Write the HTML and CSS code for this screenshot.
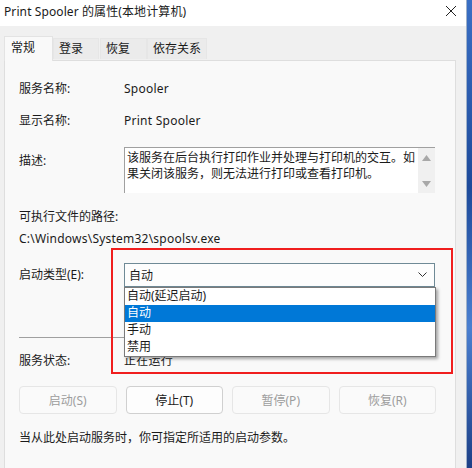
FILE: index.html
```html
<!DOCTYPE html>
<html lang="zh-CN">
<head>
<meta charset="utf-8">
<link rel="stylesheet" href="styles.css">
</head>
<body>
<div class="screen">
  <div class="dialog">
    <div class="titlebar">
      <span class="title">Print Spooler 的属性(本地计算机)</span>
      <svg class="close" width="12" height="12" viewBox="0 0 12 12"><path d="M1 1 L11 11 M11 1 L1 11" stroke="#222" stroke-width="1" fill="none"/></svg>
    </div>
    <div class="body">
      <div class="tabs">
        <div class="tab active">常规</div>
        <div class="tab">登录</div>
        <div class="tab">恢复</div>
        <div class="tab">依存关系</div>
      </div>
      <div class="panel">
        <div class="row r1"><span class="label">服务名称:</span><span class="value">Spooler</span></div>
        <div class="row r2"><span class="label">显示名称:</span><span class="value">Print Spooler</span></div>
        <div class="row r3"><span class="label top">描述:</span>
          <div class="desc">
            <div class="desc-text">该服务在后台执行打印作业并处理与打印机的交互。如果关闭该服务，则无法进行打印或查看打印机。</div>
            <div class="scroll">
              <svg width="9" height="6" viewBox="0 0 9 6"><path d="M0 6 L4.5 0 L9 6 Z" fill="#a8a8a8"/></svg>
              <svg width="9" height="6" viewBox="0 0 9 6"><path d="M0 0 L4.5 6 L9 0 Z" fill="#a8a8a8"/></svg>
            </div>
          </div>
        </div>
        <div class="line r4">可执行文件的路径:</div>
        <div class="line r5">C:\Windows\System32\spoolsv.exe</div>
        <div class="row r6"><span class="label">启动类型(E):</span>
          <div class="combo-wrap">
            <div class="combo">
              <span>自动</span>
              <svg width="9" height="6" viewBox="0 0 9 6"><path d="M0.5 0.5 L4.5 4.5 L8.5 0.5" stroke="#333" stroke-width="1" fill="none"/></svg>
            </div>
            <div class="list">
              <div class="item">自动(延迟启动)</div>
              <div class="item sel">自动</div>
              <div class="item">手动</div>
              <div class="item">禁用</div>
            </div>
          </div>
        </div>
        <div class="sep"></div>
        <div class="row r7"><span class="label">服务状态:</span><span class="value">正在运行</span></div>
        <div class="buttons">
          <button class="btn dis">启动(S)</button>
          <button class="btn">停止(T)</button>
          <button class="btn dis">暂停(P)</button>
          <button class="btn dis">恢复(R)</button>
        </div>
        <div class="line r8">当从此处启动服务时，你可指定所适用的启动参数。</div>
      </div>
    </div>
  </div>
  <div class="redbox"></div>
</div>
</body>
</html>
```
FILE: styles.css
```css
* { box-sizing: border-box; }
html, body { margin: 0; padding: 0; }
body {
  width: 472px;
  height: 468px;
  overflow: hidden;
  background: linear-gradient(180deg, #3a6fc4 0%, #1d4a9a 40%, #4a7fd0 70%, #1c3f86 100%);
  font-family: "Noto Sans", "Noto Sans CJK SC", sans-serif;
  font-size: 12px;
  color: #1b1b1b;
}
.screen { position: relative; width: 472px; height: 468px; }
.dialog {
  width: 467px;
  height: 468px;
  background: #f0f0f0;
  border-right: 1px solid #9fb1c9;
  display: flex;
  flex-direction: column;
}
.titlebar {
  height: 26px;
  background: #ffffff;
  display: flex;
  align-items: center;
  justify-content: space-between;
  padding: 0 9px 2px 4px;
  flex: none;
}
.title { font-size: 12px; color: #1a1a1a; line-height: 16px; letter-spacing: 0.1px; }
.close { margin-top: -2px; }
.body { flex: 1; padding: 9px 10px 0 4px; display: flex; flex-direction: column; }
.tabs { display: flex; align-items: flex-end; height: 25px; position: relative; z-index: 1; }
.tab {
  height: 21px;
  margin-bottom: 1px;
  padding: 0 5px;
  line-height: 20px;
  white-space: nowrap;
  background: #ebebeb;
  border: 1px solid #e6e6e6;
  border-bottom: none;
  color: #1a1a1a;
}
.tab:nth-child(2) { width: 46px; }
.tab:nth-child(3) { width: 47px; margin-left: 1px; }
.tab:nth-child(4) { width: 60px; }
.tab.active {
  width: 49px;
  height: 25px;
  margin-bottom: -1px;
  padding: 0 6px;
  line-height: 22px;
  background: #f9f9f9;
  border: 1px solid #e3e3e3;
  border-bottom: none;
}
.panel {
  flex: 1;
  background: #f9f9f9;
  border: 1px solid #dedede;
  border-bottom: none;
  padding: 18px 0 0 14px;
  width: 452px;
  display: flex;
  flex-direction: column;
}
.row { display: flex; align-items: center; }
.label { width: 105px; flex: none; line-height: 20px; }
.label.top { align-self: flex-start; margin-top: 4px; }
.value { line-height: 20px; letter-spacing: 0.25px; }
.line { line-height: 20px; }
.r2 { margin-top: 12px; }
.r3 { margin-top: 16px; align-items: flex-start; }
.desc {
  width: 311px;
  height: 46px;
  background: #ffffff;
  border-top: 1px solid #a0a0a0;
  border-left: 1px solid #a0a0a0;
  display: flex;
}
.desc-text { flex: 1; padding: 2px 2px 0 2px; line-height: 16px; }
.scroll {
  width: 17px;
  background: #f0f0f0;
  display: flex;
  flex-direction: column;
  justify-content: space-between;
  align-items: center;
  padding: 7px 0 6px;
}
.r4 { margin-top: 14px; }
.r5 { margin-top: 2px; letter-spacing: 0.22px; }
.r6 { margin-top: 14px; }
.combo-wrap { position: relative; width: 312px; }
.combo {
  height: 24px;
  width: 311px;
  background: #fdfdfd;
  border: 1px solid #6f8a96;
  display: flex;
  align-items: center;
  justify-content: space-between;
  padding: 0 7px 0 4px;
}
.list {
  position: absolute;
  top: 24px;
  left: 0;
  width: 312px;
  background: #ffffff;
  border: 1px solid #7a7a7a;
  box-shadow: 2px 2px 3px rgba(0,0,0,0.35);
  z-index: 2;
}
.item { height: 17px; line-height: 16px; padding-left: 2px; }
.item.sel { background: #0078d7; color: #ffffff; }
.sep { margin-top: 50px; height: 1px; width: 416px; background: #a0a0a0; }
.r7 { margin-top: 13px; }
.buttons {
  margin-top: 15px;
  width: 417px;
  display: grid;
  grid-template-columns: repeat(4, 1fr);
  gap: 9px;
}
.btn {
  height: 28px;
  font-family: inherit;
  font-size: 12px;
  background: #fdfdfd;
  border: 1px solid #d0d0d0;
  border-radius: 4px;
  color: #1a1a1a;
  padding: 0;
}
.btn.dis { background: #fafafa; border-color: #e6e6e6; color: #9d9d9d; }
.r8 { margin-top: 14px; }
.redbox {
  position: absolute;
  left: 111px;
  top: 248px;
  width: 342px;
  height: 126px;
  border: 2px solid #f01e1e;
  z-index: 5;
}
```
